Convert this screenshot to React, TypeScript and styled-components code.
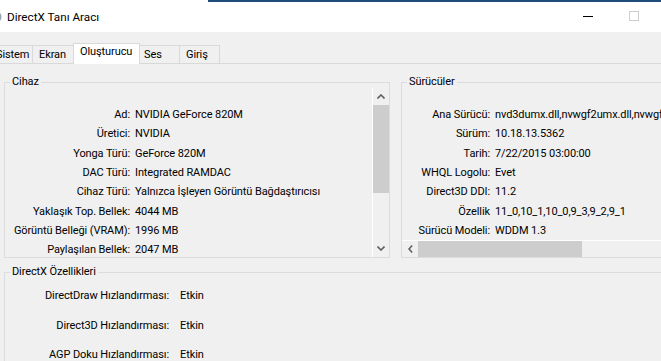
import styled, { createGlobalStyle } from 'styled-components';

const GlobalStyle = createGlobalStyle`
  html, body {
    margin: 0;
    padding: 0;
  }
  body {
    background: #f0f0f0;
    font-family: Roboto, "Noto Sans", sans-serif;
    font-size: 11px;
    letter-spacing: -0.1px;
    color: #000;
  }
`;

const Screen = styled.div`
  width: 661px;
  height: 361px;
  overflow: hidden;
  background: #f0f0f0;
`;

const Window = styled.div`
  width: 703px;
  background: #f0f0f0;
`;

const TopEdge = styled.div`
  height: 2px;
  display: flex;
`;

const EdgePart = styled.div<{ $color: string; $w?: number }>`
  background: ${p => p.$color};
  ${p => (p.$w ? `width: ${p.$w}px;` : 'flex: 1;')}
`;

const TitleBar = styled.div`
  height: 30px;
  background: #fff;
  display: flex;
  align-items: center;
`;

const AppIcon = styled.svg`
  width: 16px;
  height: 16px;
  margin-left: -13px;
  margin-right: 4px;
  flex-shrink: 0;
`;

const Title = styled.div`
  flex: 1;
  font-size: 11.7px;
  letter-spacing: 0;
  white-space: nowrap;
`;

const CaptionButton = styled.div`
  width: 46px;
  height: 30px;
  display: flex;
  align-items: center;
  justify-content: center;
`;

const MinGlyph = styled.div`
  width: 10px;
  height: 1px;
  background: #000;
  margin-top: -2px;
`;

const MaxGlyph = styled.div`
  width: 10px;
  height: 10px;
  box-sizing: border-box;
  border: 1px solid #cccccc;
  margin-top: -2px;
`;

const TabBar = styled.div`
  height: 31px;
  display: flex;
  align-items: flex-end;
  border-bottom: 1px solid #d9d9d9;
`;

const Tab = styled.div<{ $w: number; $active?: boolean; $first?: boolean; $pad?: number }>`
  position: relative;
  box-sizing: border-box;
  width: ${p => p.$w}px;
  height: ${p => (p.$active ? 21 : 18)}px;
  padding-left: ${p => p.$pad ?? 6}px;
  line-height: ${p => (p.$active ? 15 : 17)}px;
  font-size: 11px;
  white-space: nowrap;
  overflow: hidden;
  background: ${p => (p.$active ? '#fff' : '#f0f0f0')};
  border-top: 1px solid #d9d9d9;
  border-right: 1px solid #d9d9d9;
  border-left: ${p => (p.$active || p.$first ? '1px solid #d9d9d9' : 'none')};
  margin-left: ${p => (p.$first ? -11 : p.$active ? -1 : 0)}px;
  margin-bottom: ${p => (p.$active ? -1 : 0)}px;
  z-index: ${p => (p.$active ? 1 : 0)};
`;

const Content = styled.div`
  padding: 12px 0 0 4px;
  display: flex;
  flex-direction: column;
  gap: 8px;
`;

const TopRow = styled.div`
  display: flex;
  gap: 11px;
`;

const Group = styled.fieldset<{ $w: number }>`
  margin: 0;
  padding: 0;
  min-width: 0;
  width: ${p => p.$w}px;
  box-sizing: border-box;
  border: 1px solid #dcdcdc;
`;

const Legend = styled.legend`
  margin-left: 5px;
  padding: 0 2px;
  line-height: 12px;
  font-size: 11px;
`;

const ListArea = styled.div<{ $h: number }>`
  display: flex;
  height: ${p => p.$h}px;
`;

const Rows = styled.div<{ $top: number }>`
  flex: 1;
  min-width: 0;
  overflow: hidden;
  padding-top: ${p => p.$top}px;
`;

const Row = styled.div<{ $h: number }>`
  display: flex;
  align-items: center;
  height: ${p => p.$h}px;
  white-space: nowrap;
`;

const Label = styled.div<{ $w: number }>`
  width: ${p => p.$w}px;
  flex-shrink: 0;
  text-align: right;
`;

const Value = styled.div<{ $gap: number }>`
  margin-left: ${p => p.$gap}px;
`;

const VScroll = styled.div`
  width: 16px;
  border-left: 1px solid #fff;
  background: #f0f0f0;
  display: flex;
  flex-direction: column;
`;

const ArrowButton = styled.div<{ $w: number; $h: number }>`
  width: ${p => p.$w}px;
  height: ${p => p.$h}px;
  flex-shrink: 0;
  display: flex;
  align-items: center;
  justify-content: center;
`;

const Thumb = styled.div<{ $w: number; $h: number }>`
  width: ${p => p.$w}px;
  height: ${p => p.$h}px;
  background: #cdcdcd;
  flex-shrink: 0;
`;

const Track = styled.div`
  flex: 1;
`;

const HScroll = styled.div`
  height: 16px;
  border-top: 1px solid #fff;
  background: #f0f0f0;
  display: flex;
`;

const Chevron = ({ dir }: { dir: 'up' | 'down' | 'left' }) => {
  if (dir === 'left') {
    return (
      <svg width="5" height="8" viewBox="0 0 5 8">
        <polyline points="4.2,0.5 1,4 4.2,7.5" fill="none" stroke="#606060" strokeWidth="1.6" />
      </svg>
    );
  }
  const pts = dir === 'up' ? '0.5,4.5 4,1 7.5,4.5' : '0.5,0.5 4,4 7.5,0.5';
  return (
    <svg width="8" height="5" viewBox="0 0 8 5">
      <polyline points={pts} fill="none" stroke="#606060" strokeWidth="1.6" />
    </svg>
  );
};

const CloseGlyph = () => (
  <svg width="10" height="10" viewBox="0 0 10 10">
    <path d="M0.5 0.5 L9.5 9.5 M9.5 0.5 L0.5 9.5" stroke="#000" strokeWidth="1" />
  </svg>
);

const cihaz: [string, string][] = [
  ['Ad:', 'NVIDIA GeForce 820M'],
  ['Üretici:', 'NVIDIA'],
  ['Yonga Türü:', 'GeForce 820M'],
  ['DAC Türü:', 'Integrated RAMDAC'],
  ['Cihaz Türü:', 'Yalnızca İşleyen Görüntü Bağdaştırıcısı'],
  ['Yaklaşık Top. Bellek:', '4044 MB'],
  ['Görüntü Belleği (VRAM):', '1996 MB'],
  ['Paylaşılan Bellek:', '2047 MB'],
];

const suruculer: [string, string][] = [
  ['Ana Sürücü:', 'nvd3dumx.dll,nvwgf2umx.dll,nvwgf2umx.dll,nvwgf2umx.dll'],
  ['Sürüm:', '10.18.13.5362'],
  ['Tarih:', '7/22/2015 03:00:00'],
  ['WHQL Logolu:', 'Evet'],
  ['Direct3D DDI:', '11.2'],
  ['Özellik', '11_0,10_1,10_0,9_3,9_2,9_1'],
  ['Sürücü Modeli:', 'WDDM 1.3'],
];

const ozellikler: [string, string][] = [
  ['DirectDraw Hızlandırması:', 'Etkin'],
  ['Direct3D Hızlandırması:', 'Etkin'],
  ['AGP Doku Hızlandırması:', 'Etkin'],
];

export default function App() {
  return (
    <Screen>
      <GlobalStyle />
      <Window>
        <TopEdge>
          <EdgePart $color="#ffffff" $w={208} />
          <EdgePart $color="#1f4b78" />
        </TopEdge>
        <TitleBar>
          <AppIcon viewBox="0 0 16 16">
            <circle cx="8" cy="8" r="6.5" fill="#9aa4ad" />
            <circle cx="8" cy="8" r="3.5" fill="#dfe5ea" />
          </AppIcon>
          <Title>DirectX Tanı Aracı</Title>
          <CaptionButton>
            <MinGlyph />
          </CaptionButton>
          <CaptionButton>
            <MaxGlyph />
          </CaptionButton>
          <CaptionButton>
            <CloseGlyph />
          </CaptionButton>
        </TitleBar>

        <TabBar>
          <Tab $w={44} $first>Sistem</Tab>
          <Tab $w={41}>Ekran</Tab>
          <Tab $w={67} $active>Oluşturucu</Tab>
          <Tab $w={40} $pad={4}>Ses</Tab>
          <Tab $w={40}>Giriş</Tab>
        </TabBar>

        <Content>
          <TopRow>
            <Group $w={386}>
              <Legend>Cihaz</Legend>
              <ListArea $h={169}>
                <Rows $top={17}>
                  {cihaz.map(([k, v]) => (
                    <Row key={k} $h={19.3}>
                      <Label $w={125}>{k}</Label>
                      <Value $gap={5}>{v}</Value>
                    </Row>
                  ))}
                </Rows>
                <VScroll>
                  <ArrowButton $w={16} $h={17}>
                    <Chevron dir="up" />
                  </ArrowButton>
                  <Thumb $w={16} $h={88} />
                  <Track />
                  <ArrowButton $w={16} $h={17}>
                    <Chevron dir="down" />
                  </ArrowButton>
                </VScroll>
              </ListArea>
            </Group>

            <Group $w={298}>
              <Legend>Sürücüler</Legend>
              <ListArea $h={152}>
                <Rows $top={17}>
                  {suruculer.map(([k, v]) => (
                    <Row key={k} $h={19.3}>
                      <Label $w={88}>{k}</Label>
                      <Value $gap={5}>{v}</Value>
                    </Row>
                  ))}
                </Rows>
              </ListArea>
              <HScroll>
                <ArrowButton $w={16} $h={16}>
                  <Chevron dir="left" />
                </ArrowButton>
                <Thumb $w={164} $h={16} />
              </HScroll>
            </Group>
          </TopRow>

          <Group $w={695}>
            <Legend>DirectX Özellikleri</Legend>
            <Rows $top={3}>
              {ozellikler.map(([k, v]) => (
                <Row key={k} $h={29.5}>
                  <Label $w={164}>{k}</Label>
                  <Value $gap={11}>{v}</Value>
                </Row>
              ))}
            </Rows>
          </Group>
        </Content>
      </Window>
    </Screen>
  );
}
